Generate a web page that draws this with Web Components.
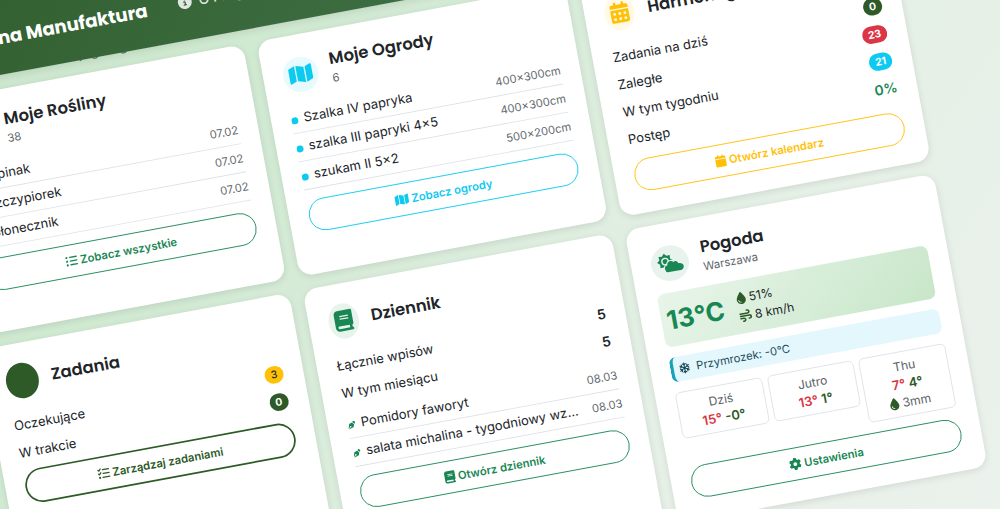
<!doctype html>
<html lang="pl">
  <head>
    <meta charset="UTF-8" />
    <meta name="viewport" content="width=device-width, initial-scale=1.0" />
    <title>Zielona Manufaktura</title>
    <style>
		:root {
			--forest: #2d5a27;
			--green: #198754;
			--info: #0dcaf0;
			--warning: #ffc107;
			--danger: #dc3545;
			--text: #212529;
			--muted: #62686e;
		}

		body {
			margin: 0;
			height: 100vh;
			overflow: hidden;
			background: #e0eee1;
			color: var(--text);
			font: 15px/24px Inter, "Noto Sans", sans-serif;
		}
    </style>
  </head>
  <body>

    <tilted-stage>
		<top-bar slot="bar">
			Zielona Manufaktura
			<a slot="nav" href="#info"><fa-icon name="info"></fa-icon>&nbsp; O Programie</a>
		</top-bar>

		<p slot="lead">Witaj, oto centrum Twojego ogrodu</p>

		<dash-card icon="seedling" tone="green" heading="Moje Rośliny" sub="38">
			<list-row icon="seedling" meta="07.02">Szpinak</list-row>
			<list-row icon="seedling" meta="07.02">Szczypiorek</list-row>
			<list-row icon="seedling" meta="07.02">Słonecznik</list-row>
			<pill-button slot="action" icon="list" tone="green">Zobacz wszystkie</pill-button>
		</dash-card>

		<dash-card icon="map" tone="info" heading="Moje Ogrody" sub="6">
			<list-row icon="dot" meta="400×300cm">Szalka IV papryka</list-row>
			<list-row icon="dot" meta="400×300cm">szalka III papryki 4×5</list-row>
			<list-row icon="dot" meta="500×200cm">szukam II 5×2</list-row>
			<pill-button slot="action" icon="map" tone="info">Zobacz ogrody</pill-button>
		</dash-card>

		<dash-card icon="days" tone="warning" heading="Harmonogram">
			<stat-row label="Zadania na dziś"><count-badge tone="forest">0</count-badge></stat-row>
			<stat-row label="Zaległe"><count-badge tone="danger">23</count-badge></stat-row>
			<stat-row label="W tym tygodniu"><count-badge tone="info">21</count-badge></stat-row>
			<stat-row label="Postęp" tone="green">0%</stat-row>
			<pill-button slot="action" icon="calendar" tone="warning">Otwórz kalendarz</pill-button>
		</dash-card>

		<dash-card icon="check" tone="forest" solid heading="Zadania">
			<stat-row label="Oczekujące"><count-badge tone="warning">3</count-badge></stat-row>
			<stat-row label="W trakcie"><count-badge tone="forest">0</count-badge></stat-row>
			<pill-button slot="action" icon="check" tone="forest" strong>Zarządzaj zadaniami</pill-button>
		</dash-card>

		<dash-card icon="book" tone="green" heading="Dziennik">
			<stat-row label="Łącznie wpisów">5</stat-row>
			<stat-row label="W tym miesiącu">5</stat-row>
			<list-row class="first" icon="pen" meta="08.03">Pomidory faworyt</list-row>
			<list-row icon="pen" meta="08.03">salata michalina - tygodniowy wzrost</list-row>
			<pill-button slot="action" icon="book" tone="green">Otwórz dziennik</pill-button>
		</dash-card>

		<dash-card icon="cloudsun" tone="green" heading="Pogoda" sub="Warszawa">
			<weather-now temp="13°C" humidity="51%" wind="8 km/h"></weather-now>
			<frost-alert>Przymrozek: -0°C</frost-alert>
			<forecast-strip>
				<forecast-day day="Dziś" high="15°" low="-0°"></forecast-day>
				<forecast-day day="Jutro" high="13°" low="1°"></forecast-day>
				<forecast-day day="Thu" high="7°" low="4°" rain="3mm"></forecast-day>
			</forecast-strip>
			<pill-button slot="action" icon="gear" tone="green">Ustawienia</pill-button>
		</dash-card>
    </tilted-stage>

    <script>
		// width of the view box and drawing, all 512 high
		const ICONS = {
			map: [576, '<path d="M384 476.1L192 421.2V35.9L384 90.8V476.1zm32-1.2V88.4L543.1 37.5c15.8-6.3 32.9 5.3 32.9 22.3V394.6c0 9.8-6 18.6-15.1 22.3L416 474.8zM15.1 95.1L160 37.2V423.6L32.9 474.5C17.1 480.8 0 469.2 0 452.2V117.4c0-9.8 6-18.6 15.1-22.3z"/>'],
			book: [448, '<path d="M96 0C43 0 0 43 0 96V416c0 53 43 96 96 96H384h32c17.7 0 32-14.3 32-32s-14.3-32-32-32V384c17.7 0 32-14.3 32-32V32c0-17.7-14.3-32-32-32H384 96zm0 384H352v64H96c-17.7 0-32-14.3-32-32s14.3-32 32-32zm32-240c0-8.8 7.2-16 16-16H336c8.8 0 16 7.2 16 16s-7.2 16-16 16H144c-8.8 0-16-7.2-16-16zm16 48H336c8.8 0 16 7.2 16 16s-7.2 16-16 16H144c-8.8 0-16-7.2-16-16s7.2-16 16-16z"/>'],
			days: [448, '<path d="M128 0c17.7 0 32 14.3 32 32V64H288V32c0-17.7 14.3-32 32-32s32 14.3 32 32V64h48c26.5 0 48 21.5 48 48v48H0V112C0 85.5 21.5 64 48 64H96V32c0-17.7 14.3-32 32-32zM0 192H448V464c0 26.5-21.5 48-48 48H48c-26.5 0-48-21.5-48-48V192zm64 80v32c0 8.8 7.2 16 16 16h32c8.8 0 16-7.2 16-16V272c0-8.8-7.2-16-16-16H80c-8.8 0-16 7.2-16 16zm128 0v32c0 8.8 7.2 16 16 16h32c8.8 0 16-7.2 16-16V272c0-8.8-7.2-16-16-16H208c-8.8 0-16 7.2-16 16zm144-16c-8.8 0-16 7.2-16 16v32c0 8.8 7.2 16 16 16h32c8.8 0 16-7.2 16-16V272c0-8.8-7.2-16-16-16H336zM64 400v32c0 8.8 7.2 16 16 16h32c8.8 0 16-7.2 16-16V400c0-8.8-7.2-16-16-16H80c-8.8 0-16 7.2-16 16zm144-16c-8.8 0-16 7.2-16 16v32c0 8.8 7.2 16 16 16h32c8.8 0 16-7.2 16-16V400c0-8.8-7.2-16-16-16H208zm112 16v32c0 8.8 7.2 16 16 16h32c8.8 0 16-7.2 16-16V400c0-8.8-7.2-16-16-16H336c-8.8 0-16 7.2-16 16z"/>'],
			calendar: [448, '<path d="M96 32V64H48C21.5 64 0 85.5 0 112v48H448V112c0-26.5-21.5-48-48-48H352V32c0-17.7-14.3-32-32-32s-32 14.3-32 32V64H160V32c0-17.7-14.3-32-32-32S96 14.3 96 32zM448 192H0V464c0 26.5 21.5 48 48 48H400c26.5 0 48-21.5 48-48V192z"/>'],
			drop: [384, '<path d="M192 512C86 512 0 426 0 320C0 228.8 130.2 57.7 166.6 11.7C172.6 4.2 181.5 0 191.1 0h1.8c9.6 0 18.5 4.2 24.5 11.7C253.8 57.7 384 228.8 384 320c0 106-86 192-192 192zM96 336c0-8.8-7.2-16-16-16s-16 7.2-16 16c0 61.9 50.1 112 112 112c8.8 0 16-7.2 16-16s-7.2-16-16-16c-44.2 0-80-35.8-80-80z"/>'],
			wind: [512, '<path d="M288 32c0 17.7 14.3 32 32 32h32c17.7 0 32 14.3 32 32s-14.3 32-32 32H32c-17.7 0-32 14.3-32 32s14.3 32 32 32H352c53 0 96-43 96-96s-43-96-96-96H320c-17.7 0-32 14.3-32 32zm64 352c0 17.7 14.3 32 32 32h32c53 0 96-43 96-96s-43-96-96-96H32c-17.7 0-32 14.3-32 32s14.3 32 32 32H416c17.7 0 32 14.3 32 32s-14.3 32-32 32H384c-17.7 0-32 14.3-32 32zM128 512h32c53 0 96-43 96-96s-43-96-96-96H32c-17.7 0-32 14.3-32 32s14.3 32 32 32H160c17.7 0 32 14.3 32 32s-14.3 32-32 32H128c-17.7 0-32 14.3-32 32s14.3 32 32 32z"/>'],
			gear: [512, '<path d="M495.9 166.6c3.2 8.7 .5 18.4-6.4 24.6l-43.3 39.4c1.1 8.3 1.7 16.8 1.7 25.4s-.6 17.1-1.7 25.4l43.3 39.4c6.9 6.2 9.6 15.9 6.4 24.6c-4.4 11.9-9.7 23.3-15.8 34.3l-4.7 8.1c-6.6 11-14 21.4-22.1 31.2c-5.9 7.2-15.7 9.6-24.5 6.8l-55.7-17.7c-13.4 10.3-28.2 18.9-44 25.4l-12.5 57.1c-2 9.1-9 16.3-18.2 17.8c-13.8 2.3-28 3.5-42.5 3.5s-28.7-1.2-42.5-3.5c-9.2-1.5-16.2-8.7-18.2-17.8l-12.5-57.1c-15.8-6.5-30.6-15.1-44-25.4L83.1 425.9c-8.8 2.8-18.6 .3-24.5-6.8c-8.1-9.8-15.5-20.2-22.1-31.2l-4.7-8.1c-6.1-11-11.4-22.4-15.8-34.3c-3.2-8.7-.5-18.4 6.4-24.6l43.3-39.4C64.6 273.1 64 264.6 64 256s.6-17.1 1.7-25.4L22.4 191.2c-6.9-6.2-9.6-15.9-6.4-24.6c4.4-11.9 9.7-23.3 15.8-34.3l4.7-8.1c6.6-11 14-21.4 22.1-31.2c5.9-7.2 15.7-9.6 24.5-6.8l55.7 17.7c13.4-10.3 28.2-18.9 44-25.4l12.5-57.1c2-9.1 9-16.3 18.2-17.8C227.3 1.2 241.5 0 256 0s28.7 1.2 42.5 3.5c9.2 1.5 16.2 8.7 18.2 17.8l12.5 57.1c15.8 6.5 30.6 15.1 44 25.4l55.7-17.7c8.8-2.8 18.6-.3 24.5 6.8c8.1 9.8 15.5 20.2 22.1 31.2l4.7 8.1c6.1 11 11.4 22.4 15.8 34.3zM256 336a80 80 0 1 0 0-160 80 80 0 1 0 0 160z"/>'],
			info: [512, '<path d="M256 512A256 256 0 1 0 256 0a256 256 0 1 0 0 512zM216 336h24V272H216c-13.3 0-24-10.7-24-24s10.7-24 24-24h48c13.3 0 24 10.7 24 24v88h8c13.3 0 24 10.7 24 24s-10.7 24-24 24H216c-13.3 0-24-10.7-24-24s10.7-24 24-24zm40-208a32 32 0 1 1 0 64 32 32 0 1 1 0-64z"/>'],
			cloudsun: [640, '<path fill-rule="evenodd" d="M408 208L342 263 349 349 263 342 208 408 153 342 67 349 74 263 8 208 74 153 67 67 153 74 208 8 263 74 349 67 342 153zM208 112a96 96 0 1 0 0 192 96 96 0 1 0 0-192z"/><circle cx="208" cy="208" r="62"/><path stroke="#e8f3ee" stroke-width="56" paint-order="stroke" d="M260 480a88 88 0 0 1-14-175c-2-50 40-89 88-89 30 0 56 14 72 36 50-34 110 2 112 54 60-8 122 28 122 86 0 50-40 88-88 88z"/>'],
			list: [512, '<g stroke="currentColor" stroke-width="60" stroke-linecap="round"><path d="M208 96H480M208 256H480M208 416H480"/></g><circle cx="64" cy="96" r="46"/><circle cx="64" cy="256" r="46"/><circle cx="64" cy="416" r="46"/>'],
			check: [512, '<g fill="none" stroke="currentColor" stroke-width="54" stroke-linecap="round" stroke-linejoin="round"><path d="M28 92l36 36 68-80M28 252l36 36 68-80M224 96H480M224 256H480M192 416H480"/></g><circle cx="64" cy="416" r="46"/>'],
			seedling: [512, '<path d="M512 32c0 114-84 208-192 222-8-60-36-114-78-154C276 58 340 32 410 32zM0 96c124 0 224 100 224 224v160c0 18-14 32-32 32s-32-14-32-32V320C72 320 0 220 0 96z"/>'],
			pen: [512, '<path fill-rule="evenodd" d="M368 18c24-24 62-24 86 0l40 40c24 24 24 62 0 86l-46 46L322 64zM294 92l126 126-52 160c-6 18-20 32-38 38L36 508l122-124a48 48 0 1 0-30-30L4 476l92-294c6-18 20-32 38-38z"/>'],
			snow: [512, '<g fill="none" stroke="currentColor" stroke-width="52" stroke-linecap="round"><path d="M256 30V482M60 143L452 369M60 369L452 143M190 66l66 60 66-60M190 446l66-60 66 60M62 226l84-34-18-88M450 286l-84 34 18 88M62 286l84 34-18 88M450 226l-84-34 18-88"/></g>'],
			dot: [512, '<circle cx="256" cy="256" r="256"/>']
		};

		function fill(host, html) {
			host.attachShadow({ mode: 'open' }).innerHTML = html;
		}

		class FaIcon extends HTMLElement {
			connectedCallback() {
				if (this.shadowRoot) return;
				const [width, body] = ICONS[this.getAttribute('name')];
				fill(this, `
				<style>
					:host { display: inline-block; height: 1em; line-height: 1; flex: none; vertical-align: -0.125em; }
					svg { display: block; height: 1em; fill: currentColor; overflow: visible; }
				</style>
				<svg viewBox="0 0 ${width} 512" aria-hidden="true">${body}</svg>
				`);
			}
		}
		customElements.define('fa-icon', FaIcon);

		class TiltedStage extends HTMLElement {
			constructor() {
				super();
				fill(this, `
				<style>
					/* the whole dashboard is shown tilted, its left and top running out of the window */
					:host {
						display: block;
						position: absolute;
						left: -201px;
						top: -55px;
						width: 140vw;
						min-height: 200vh;
						background: linear-gradient(135deg, #c8e6c9 0%, #d2ead3 35%, #e5f0e6 65%, #eff2ef 100%);
						transform: rotate(-10.5deg) scale(.866);
						transform-origin: 0 0;
					}
					header { position: relative; z-index: 1; }
					main { max-width: 1120px; padding: 0 120px; }
					::slotted(p) { margin: -18px 0 14px; font-size: 16px; line-height: 20px; color: var(--muted); }
					.grid { display: grid; grid-template-columns: repeat(3, 1fr); gap: 16px; }
				</style>
				<header><slot name="bar"></slot></header>
				<main>
					<slot name="lead"></slot>
					<div class="grid"><slot></slot></div>
				</main>
				`);
			}
		}
		customElements.define('tilted-stage', TiltedStage);

		class TopBar extends HTMLElement {
			constructor() {
				super();
				fill(this, `
				<style>
					:host {
						display: flex;
						align-items: center;
						gap: 36px;
						height: 90px;
						padding: 100px 155px 0;
						background: linear-gradient(135deg, #2d5a27, #4a7c59);
						color: #fff;
						box-shadow: 0 2px 10px rgba(0, 0, 0, .1);
						font: 700 21px/32px Poppins, Inter, sans-serif;
					}
					span { padding-top: 6px; }
					::slotted(a) { color: rgba(255, 255, 255, .85); text-decoration: none; font: 500 16px/24px Inter, sans-serif; }
				</style>
				<span><slot></slot></span>
				<nav><slot name="nav"></slot></nav>
				`);
			}
		}
		customElements.define('top-bar', TopBar);

		class DashCard extends HTMLElement {
			connectedCallback() {
				if (this.shadowRoot) return;
				const sub = this.getAttribute('sub');
				fill(this, `
				<style>
					:host {
						display: block;
						min-width: 0;
						padding: 24px 23px;
						box-sizing: border-box;
						background: #fff;
						border-radius: 16px;
						box-shadow: 0 2px 8px rgba(0, 0, 0, .1);
						--tone: var(--${this.getAttribute('tone')});
					}
					header { display: flex; align-items: center; gap: 15px; min-height: 38px; margin-bottom: 12px; }
					.round {
						display: grid;
						place-items: center;
						height: 41px;
						margin: -2px 0;
						padding: 0 7px;
						border-radius: 50%;
						color: var(--tone);
						background: color-mix(in srgb, var(--tone) 10%, white);
						font-size: 24px;
					}
					:host([solid]) .round { background: var(--tone); }
					h2 { margin: 0; font: 600 19px/22px Poppins, Inter, sans-serif; }
					small { display: block; font-size: 13px; line-height: 22px; color: var(--muted); }
				</style>
				<header>
					<span class="round"><fa-icon name="${this.getAttribute('icon')}"></fa-icon></span>
					<div><h2>${this.getAttribute('heading')}</h2>${sub ? `<small>${sub}</small>` : ''}</div>
				</header>
				<slot></slot>
				<slot name="action"></slot>
				`);
			}
		}
		customElements.define('dash-card', DashCard);

		class ListRow extends HTMLElement {
			connectedCallback() {
				if (this.shadowRoot) return;
				const icon = this.getAttribute('icon');
				fill(this, `
				<style>
					:host { display: flex; align-items: center; padding: 4px 0; border-bottom: 1px solid #dee2e6; }
					:host(.first) { margin-top: 8px; }
					fa-icon { margin-right: 7px; font-size: ${icon === 'dot' ? 8 : 9}px; color: ${icon === 'dot' ? 'var(--info)' : 'var(--green)'}; }
					span { flex: 1; min-width: 0; overflow: hidden; text-overflow: ellipsis; white-space: nowrap; }
					small { margin-left: 12px; font-size: 13px; color: var(--muted); }
				</style>
				<span><fa-icon name="${icon}"></fa-icon><slot></slot></span>
				<small>${this.getAttribute('meta')}</small>
				`);
			}
		}
		customElements.define('list-row', ListRow);

		class StatRow extends HTMLElement {
			connectedCallback() {
				if (this.shadowRoot) return;
				fill(this, `
				<style>
					:host { display: flex; justify-content: space-between; align-items: flex-start; height: 24px; padding: 4px 0; }
					span { padding-top: 4px; }
					b { display: flex; align-items: center; height: 24px; font-size: 16px; font-weight: 600; color: var(--${this.getAttribute('tone') || 'text'}); }
				</style>
				<span>${this.getAttribute('label')}</span>
				<b><slot></slot></b>
				`);
			}
		}
		customElements.define('stat-row', StatRow);

		class CountBadge extends HTMLElement {
			connectedCallback() {
				if (this.shadowRoot) return;
				const tone = this.getAttribute('tone');
				fill(this, `
				<style>
					:host {
						display: block;
						padding: 4px 7px;
						border-radius: 10px;
						background: var(--${tone});
						color: ${tone === 'warning' ? 'var(--text)' : '#fff'};
						font-size: 12px;
						font-weight: ${tone === 'warning' ? 500 : 700};
						line-height: 12px;
					}
				</style>
				<slot></slot>
				`);
			}
		}
		customElements.define('count-badge', CountBadge);

		class PillButton extends HTMLElement {
			connectedCallback() {
				if (this.shadowRoot) return;
				fill(this, `
				<style>
					:host { display: block; margin-top: 12px; --tone: var(--${this.getAttribute('tone')}); }
					:host([strong]) { margin-top: 8px; }
					button {
						display: block;
						width: 100%;
						padding: 7px 16px;
						border: 1px solid var(--tone);
						border-radius: 20px;
						background: transparent;
						color: var(--tone);
						font: 600 13px/22px Inter, sans-serif;
						cursor: pointer;
					}
					:host([strong]) button { border-width: 2px; }
					fa-icon { font-size: 14px; }
				</style>
				<button type="button"><fa-icon name="${this.getAttribute('icon')}"></fa-icon> <slot></slot></button>
				`);
			}
		}
		customElements.define('pill-button', PillButton);

		class WeatherNow extends HTMLElement {
			connectedCallback() {
				if (this.shadowRoot) return;
				fill(this, `
				<style>
					:host {
						display: flex;
						align-items: center;
						gap: 16px;
						padding: 10px 6px;
						border-radius: 8px;
						background: linear-gradient(135deg, #e8f5e9, #c8e6c9);
						font-size: 14px;
						line-height: 21px;
					}
					strong { font-size: 30px; font-weight: 700; line-height: 36px; color: var(--green); }
					fa-icon { color: var(--forest); }
				</style>
				<strong>${this.getAttribute('temp')}</strong>
				<div>
					<div><fa-icon name="drop"></fa-icon> ${this.getAttribute('humidity')}</div>
					<div><fa-icon name="wind"></fa-icon> ${this.getAttribute('wind')}</div>
				</div>
				`);
			}
		}
		customElements.define('weather-now', WeatherNow);

		class FrostAlert extends HTMLElement {
			constructor() {
				super();
				fill(this, `
				<style>
					:host {
						display: flex;
						align-items: center;
						gap: 7px;
						margin: 12px 0;
						padding: 4px 6px;
						border-left: 4px solid #17a2b8;
						border-radius: 8px;
						background: #e3f7fd;
						color: #1b4b5a;
						font-size: 13px;
						line-height: 21px;
					}
				</style>
				<fa-icon name="snow"></fa-icon>
				<span><slot></slot></span>
				`);
			}
		}
		customElements.define('frost-alert', FrostAlert);

		class ForecastStrip extends HTMLElement {
			constructor() {
				super();
				fill(this, `
				<style>
					:host { display: grid; grid-template-columns: repeat(3, 1fr); align-items: start; gap: 6px; }
				</style>
				<slot></slot>
				`);
			}
		}
		customElements.define('forecast-strip', ForecastStrip);

		class ForecastDay extends HTMLElement {
			connectedCallback() {
				if (this.shadowRoot) return;
				const rain = this.getAttribute('rain');
				fill(this, `
				<style>
					:host {
						display: block;
						padding: 5px;
						border: 1px solid #dee2e6;
						border-radius: 6px;
						text-align: center;
						font-size: 14px;
						line-height: 21px;
						color: #5a6268;
					}
					b { font-size: 15px; font-weight: 600; color: var(--danger); }
					b + b, fa-icon { color: var(--forest); }
				</style>
				<div>${this.getAttribute('day')}</div>
				<div><b>${this.getAttribute('high')}</b> <b>${this.getAttribute('low')}</b></div>
				${rain ? `<div><fa-icon name="drop"></fa-icon> ${rain}</div>` : ''}
				`);
			}
		}
		customElements.define('forecast-day', ForecastDay);
    </script>

  </body>
</html>
